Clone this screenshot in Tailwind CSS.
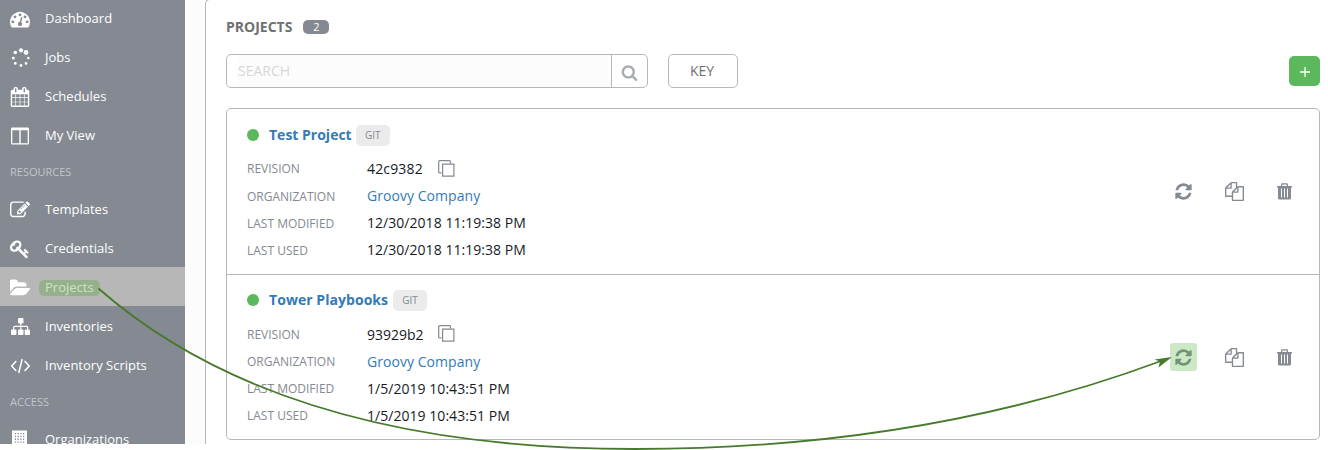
<!DOCTYPE html>
<html lang="en">
<head>
<meta charset="utf-8">
<title>Projects</title>
<script src="https://cdn.jsdelivr.net/npm/@tailwindcss/browser@4"></script>
</head>
<body class="relative h-[450px] w-[1328px] overflow-hidden bg-white font-['Open_Sans',sans-serif]">
<svg class="hidden">
  <symbol id="refresh" viewBox="0 0 1792 1792"><path d="M1639 1056q0 5-1 7-64 268-268 434.500t-478 166.500q-146 0-282.500-55t-243.500-157l-129 129q-19 19-45 19t-45-19-19-45v-448q0-26 19-45t45-19h448q26 0 45 19t19 45-19 45l-137 137q71 66 161 102t187 36q134 0 250-65t186-179q11-17 53-117 8-23 30-23h192q13 0 22.500 9.500t9.500 22.500zm25-800v448q0 26-19 45t-45 19h-448q-26 0-45-19t-19-45 19-45l138-138q-148-137-349-137-134 0-250 65t-186 179q-11 17-53 117-8 23-30 23h-199q-13 0-22.500-9.500t-9.500-22.500v-7q65-268 270-434.500t480-166.500q146 0 284 55.500t245 156.500l130-129q19-19 45-19t45 19 19 45z"/></symbol>
  <symbol id="files" viewBox="0 0 1792 1792"><path d="M1696 384q40 0 68 28t28 68v1216q0 40-28 68t-68 28h-960q-40 0-68-28t-28-68v-288h-544q-40 0-68-28t-28-68v-672q0-40 20-88t48-76l408-408q28-28 76-48t88-20h416q40 0 68 28t28 68v328q68-40 128-40h416zm-544 213l-299 299h299v-299zm-640-384l-299 299h299v-299zm196 647l316-316v-416h-384v416q0 40-28 68t-68 28h-416v640h512v-256q0-40 20-88t48-76zm956 804v-1152h-384v416q0 40-28 68t-68 28h-416v640h896z"/></symbol>
  <symbol id="trash" viewBox="0 0 15 17"><path fill-rule="evenodd" d="M4 3V1.600Q4 .3 5.300 .3h4.400Q11 .3 11 1.600V3h4v1.500h-1V15q0 1.500-1.500 1.500h-10Q1 16.500 1 15V4.500H0V3zM5.200 3h4.600V1.900q0-.4-.4-.4H5.600q-.4 0-.4.4zM4 5.600v9h1v-9zm3 0v9h1v-9zm3 0v9h1v-9z"/></symbol>
  <symbol id="copy" viewBox="0 0 17 17"><path d="M4.600 4.100h11.300v12H4.600zM3.500 12.900H1.700q-1 0-1-1V1.700q0-1 1-1h9.800q1 0 1 1v1.500" fill="none" stroke="currentColor" stroke-width="1.200"/></symbol>
</svg>

<div class="flex h-[444px] overflow-hidden bg-[#fcfcfc]">
  <nav class="w-[185px] shrink-0 bg-[#848992] text-[13px] text-white">
    <div class="-mt-[2px]">
      <a class="flex h-[39px] items-center pt-[2px] pl-[10px]"><svg class="h-5 w-5" viewBox="0 0 1792 1792" fill="currentColor"><path d="M384 1152q0-53-37.500-90.500t-90.500-37.500-90.500 37.500-37.500 90.500 37.500 90.500 90.500 37.500 90.500-37.500 37.500-90.500zm192-448q0-53-37.500-90.500t-90.500-37.500-90.500 37.500-37.500 90.500 37.500 90.500 90.500 37.500 90.500-37.500 37.500-90.500zm428 481l101-382q6-26-7.500-48.500t-38.500-29.500-48 6.500-30 39.500l-101 382q-60 5-107 43.500t-63 98.500q-20 77 20 146t117 89 146-20 89-117q16-60-6-117t-72-91zm660-33q0-53-37.500-90.500t-90.500-37.500-90.500 37.500-37.500 90.500 37.500 90.500 90.500 37.500 90.500-37.500 37.500-90.500zm-640-640q0-53-37.500-90.500t-90.500-37.500-90.500 37.500-37.500 90.500 37.500 90.500 90.500 37.500 90.500-37.500 37.500-90.500zm448 192q0-53-37.500-90.500t-90.500-37.500-90.500 37.500-37.500 90.500 37.500 90.500 90.500 37.500 90.500-37.500 37.500-90.500zm320 448q0 261-141 483-19 29-54 29h-1402q-35 0-54-29-141-221-141-483 0-182 71-348t191-286 286-191 348-71 348 71 286 191 191 286 71 348z"/></svg><span class="ml-[15px]">Dashboard</span></a>
      <a class="flex h-[39px] items-center pt-[2px] pl-[10px]"><svg class="h-5 w-5" viewBox="0 0 20 20" fill="currentColor"><circle cx="11" cy="2.300" r="2.100"/><circle cx="16" cy="4.500" r="2.400"/><circle cx="5.300" cy="4.500" r="1.800"/><circle cx="3.300" cy="10" r="1.500"/><circle cx="18.300" cy="10" r="1.300"/><circle cx="5.300" cy="15.400" r="1.400"/><circle cx="16" cy="15.400" r="1.300"/><circle cx="11" cy="17.500" r="1.400"/></svg><span class="ml-[15px]">Jobs</span></a>
      <a class="flex h-[39px] items-center pt-[2px] pl-[10px]"><svg class="h-5 w-5" viewBox="0 0 1792 1792" fill="currentColor"><path d="M192 1664h288v-288h-288v288zm352 0h320v-288h-320v288zm-352-352h288v-320h-288v320zm352 0h320v-320h-320v320zm-352-384h288v-288h-288v288zm736 736h320v-288h-320v288zm-384-736h320v-288h-320v288zm768 736h288v-288h-288v288zm-384-352h320v-320h-320v320zm-352-864v-288q0-13-9.500-22.500t-22.500-9.500h-64q-13 0-22.500 9.500t-9.500 22.500v288q0 13 9.500 22.500t22.500 9.500h64q13 0 22.500-9.500t9.500-22.500zm736 864h288v-320h-288v320zm-384-384h320v-288h-320v288zm384 0h288v-288h-288v288zm32-480v-288q0-13-9.500-22.500t-22.500-9.500h-64q-13 0-22.500 9.500t-9.500 22.500v288q0 13 9.500 22.500t22.500 9.500h64q13 0 22.500-9.500t9.500-22.500zm384-64v1280q0 52-38 90t-90 38h-1408q-52 0-90-38t-38-90v-1280q0-52 38-90t90-38h128v-96q0-66 47-113t113-47h64q66 0 113 47t47 113v96h384v-96q0-66 47-113t113-47h64q66 0 113 47t47 113v96h128q52 0 90 38t38 90z"/></svg><span class="ml-[15px]">Schedules</span></a>
      <a class="flex h-[39px] items-center pt-[2px] pl-[10px]"><svg class="h-5 w-5" viewBox="0 0 20 20" fill="currentColor"><path fill-rule="evenodd" d="M2.300 1.500h15.400q1.300 0 1.300 1.300v14.400q0 1.300-1.300 1.300H2.300Q1 18.500 1 17.200V2.800Q1 1.500 2.300 1.500zM2.300 4.300v12.900h7V4.300zm8.400 0v12.900h7V4.300z"/></svg><span class="ml-[15px]">My View</span></a>
      <div class="flex h-[35px] items-center pt-[2px] pl-[10px] text-[11px] text-[#c3c6ca]">RESOURCES</div>
      <a class="flex h-[39px] items-center pt-[2px] pl-[10px]"><svg class="h-5 w-5" viewBox="0 0 1792 1792" fill="currentColor"><path d="M888 1184l116-116-152-152-116 116v56h96v96h56zm440-720q-16-16-33 1l-350 350q-17 17-1 33t33-1l350-350q17-17 1-33zm80 594v190q0 119-84.500 203.500t-203.500 84.500h-832q-119 0-203.500-84.500t-84.500-203.500v-832q0-119 84.500-203.500t203.500-84.500h832q63 0 117 25 15 7 18 23 3 17-9 29l-49 49q-14 14-32 8-23-6-45-6h-832q-66 0-113 47t-47 113v832q0 66 47 113t113 47h832q66 0 113-47t47-113v-126q0-13 9-22l64-64q15-15 35-7t20 29zm-96-738l288 288-672 672h-288v-288zm444 132l-92 92-288-288 92-92q28-28 68-28t68 28l152 152q28 28 28 68t-28 68z"/></svg><span class="ml-[15px]">Templates</span></a>
      <a class="flex h-[39px] items-center pt-[2px] pl-[10px]"><svg class="h-5 w-5" viewBox="0 0 1792 1792" fill="currentColor"><path d="M832 512q0-80-56-136t-136-56-136 56-56 136q0 42 19 83-41-19-83-19-80 0-136 56t-56 136 56 136 136 56 136-56 56-136q0-42-19-83 41 19 83 19 80 0 136-56t56-136zm851 704q0 17-49 66t-66 49q-9 0-28.500-16t-36.500-33-38.500-40-24.500-26l-96 96 220 220q28 28 28 68 0 42-39 81t-81 39q-40 0-68-28l-671-671q-176 131-365 131-163 0-265.500-102.500t-102.500-265.500q0-160 95-313t248-248 313-95q163 0 265.500 102.500t102.500 265.500q0 189-131 365l355 355 96-96q-3-3-26-24.500t-40-38.500-33-36.500-16-28.500q0-17 49-66t66-49q13 0 23 10 6 6 46 44.500t82 79.500 86.500 86 73 78 28.500 41z"/></svg><span class="ml-[15px]">Credentials</span></a>
      <a class="flex h-[39px] items-center bg-[#b7b7b7] pt-[2px] pl-[10px]"><svg class="h-5 w-5" viewBox="0 0 1792 1792" fill="currentColor"><path d="M1815 952q0 31-31 66l-336 396q-43 51-120.500 86.500t-143.500 35.500h-1088q-34 0-60.500-13t-26.500-43q0-31 31-66l336-396q43-51 120.500-86.500t143.500-35.500h1088q34 0 60.500 13t26.500 43zm-343-344v160h-832q-94 0-197 47.500t-164 119.500l-337 396-5 6q0-4-.5-12.500t-.5-12.500v-960q0-92 66-158t158-66h320q92 0 158 66t66 158v32h544q92 0 158 66t66 158z"/></svg><span class="ml-[9px] flex h-4 w-[61px] items-center rounded-[5px] bg-[#96b08c] pl-[6px] text-[#cfe2c4]">Projects</span></a>
      <a class="flex h-[39px] items-center pt-[2px] pl-[10px]"><svg class="h-5 w-5" viewBox="0 0 20 20" fill="currentColor"><rect x="8" y="1" width="5.500" height="5.500" rx="1"/><rect x="1" y="12.500" width="5.500" height="5.500" rx="1"/><rect x="8" y="12.500" width="5.500" height="5.500" rx="1"/><rect x="14.700" y="12.500" width="5.300" height="5.500" rx="1"/><path d="M10.800 6v8M3.700 14V10.300q0-1 1-1h12q1 0 1 1V14" fill="none" stroke="currentColor" stroke-width="1.200"/></svg><span class="ml-[15px]">Inventories</span></a>
      <a class="flex h-[39px] items-center pt-[2px] pl-[10px]"><svg class="h-5 w-5" viewBox="0 0 20 20" fill="none" stroke="currentColor" stroke-width="1.500"><path d="M6.300 5L1.700 10l4.600 5M14.600 5l4.600 5-4.600 5M12.200 3l-3.500 14"/></svg><span class="ml-[15px]">Inventory Scripts</span></a>
      <div class="flex h-[35px] items-center pt-[2px] pl-[10px] text-[11px] text-[#c3c6ca]">ACCESS</div>
      <a class="flex h-[39px] items-center pt-[2px] pl-[10px]"><svg class="h-5 w-5" viewBox="0 0 20 20" fill="currentColor"><path d="M2 .5h15v19H2z"/><path d="M5.500 3v17M8.200 3v17M10.900 3v17M13.600 3v17" stroke="#848992" stroke-width="1.200" stroke-dasharray="1.300 1.500"/></svg><span class="ml-[15px]">Organizations</span></a>
    </div>
  </nav>

  <main class="-mt-px ml-5 h-[460px] flex-1 rounded-tl-[5px] border-t border-l border-[#b7b7b7] bg-white pr-2 pl-5">
    <div class="flex h-[54px] items-center text-sm font-bold text-[#707070]">PROJECTS<span class="ml-[11px] flex h-[14px] w-[26px] items-center justify-center rounded-[5px] bg-[#848992] text-[11px] font-normal text-white">2</span></div>
    <div class="flex h-[34px] items-center">
      <div class="flex h-[34px] w-[422px] rounded-[5px] border border-[#b7b7b7]">
        <div class="ml-[10px] flex flex-1 items-center border-r border-[#b7b7b7] bg-[#fcfcfc] pl-[1px] text-sm text-[#d7d7d7]">SEARCH</div>
        <div class="flex w-[35px] items-center pt-[2px] pl-[9px] text-[#a9adb3]"><svg class="h-[17px] w-[17px]" viewBox="0 0 1792 1792" fill="currentColor"><path d="M1216 832q0-185-131.500-316.500t-316.500-131.500-316.500 131.500-131.500 316.500 131.500 316.500 316.500 131.500 316.500-131.500 131.500-316.500zm512 832q0 52-38 90t-90 38q-54 0-90-38l-343-342q-179 124-399 124-143 0-273.500-55.500t-225-150-150-225-55.500-273.500 55.500-273.500 150-225 225-150 273.500-55.500 273.500 55.500 225 150 150 225 55.500 273.500q0 220-124 399l343 343q37 37 37 90z"/></svg></div>
      </div>
      <button class="ml-5 h-[34px] w-[70px] rounded-[5px] border border-[#b7b7b7] pr-[2px] text-sm text-[#707070]">KEY</button>
      <button class="ml-auto flex h-[30px] w-[31px] items-center justify-center rounded-[5px] bg-[#5cb85c] text-white"><svg class="mt-[2px] h-[10px] w-[10px]" viewBox="0 0 10 10"><path d="M5 0v10M0 5h10" stroke="currentColor" stroke-width="1.300"/></svg></button>
    </div>

    <div class="mt-5 h-[332px] rounded-[5px] border border-[#b7b7b7] text-sm text-[#161b1f]">
      <section class="flex h-[166px] justify-between border-b border-[#b7b7b7] pr-[27px] pl-5">
        <div class="pt-[15px]">
          <div class="flex h-[22px] items-center"><i class="h-3 w-3 rounded-full bg-[#5cb85c]"></i><b class="ml-[10px] text-[#337ab7]">Test Project</b><span class="ml-[4px] flex h-[21px] w-[34px] items-center justify-center rounded-[5px] bg-[#ebebeb] text-[10px] text-[#848992]">GIT</span></div>
          <dl class="mt-[9px] grid auto-rows-[27px] grid-cols-[120px_auto] items-center">
            <dt class="text-xs text-[#848992]">REVISION</dt><dd class="flex items-center"><span class="w-[56px] tracking-[0.15px]">42c9382</span><svg class="ml-[15px] h-[17px] w-[17px] text-[#848992]"><use href="#copy"/></svg></dd>
            <dt class="pt-[2px] text-xs text-[#848992]">ORGANIZATION</dt><dd class="tracking-[0.05px] text-[#337ab7]">Groovy Company</dd>
            <dt class="pt-[2px] text-xs text-[#848992]">LAST MODIFIED</dt><dd class="tracking-[0.04px]">12/30/2018 11:19:38 PM</dd>
            <dt class="pt-[2px] text-xs text-[#848992]">LAST USED</dt><dd class="tracking-[0.04px]">12/30/2018 11:19:38 PM</dd>
          </dl>
        </div>
        <div class="flex items-center text-[#848992]">
          <span class="mr-[28px] flex h-7 w-[27px] items-center justify-center"><svg class="h-[19px] w-[19px]" fill="currentColor"><use href="#refresh"/></svg></span>
          <svg class="mr-[33px] h-[19px] w-[19px]" fill="currentColor"><use href="#files"/></svg>
          <svg class="h-[17px] w-[15px]" fill="currentColor"><use href="#trash"/></svg>
        </div>
      </section>
      <section class="flex h-[164px] justify-between pr-[27px] pl-5">
        <div class="pt-[14px]">
          <div class="flex h-[22px] items-center"><i class="h-3 w-3 rounded-full bg-[#5cb85c]"></i><b class="ml-[10px] tracking-[0.05px] text-[#337ab7]">Tower Playbooks</b><span class="ml-[5px] flex h-[21px] w-[34px] items-center justify-center rounded-[5px] bg-[#ebebeb] text-[10px] text-[#848992]">GIT</span></div>
          <dl class="mt-[10px] grid auto-rows-[27px] grid-cols-[120px_auto] items-center">
            <dt class="text-xs text-[#848992]">REVISION</dt><dd class="flex items-center"><span class="w-[56px]">93929b2</span><svg class="mb-[2px] ml-[15px] h-[17px] w-[17px] text-[#848992]"><use href="#copy"/></svg></dd>
            <dt class="text-xs text-[#848992]">ORGANIZATION</dt><dd class="tracking-[0.05px] text-[#337ab7]">Groovy Company</dd>
            <dt class="text-xs text-[#848992]">LAST MODIFIED</dt><dd class="tracking-[0.04px]">1/5/2019 10:43:51 PM</dd>
            <dt class="text-xs text-[#848992]">LAST USED</dt><dd class="tracking-[0.04px]">1/5/2019 10:43:51 PM</dd>
          </dl>
        </div>
        <div class="flex items-center text-[#848992]">
          <span class="mr-[28px] flex h-7 w-[27px] items-center justify-center rounded-[3px] bg-[#cde8c4] text-[#6f9478]"><svg class="h-[19px] w-[19px]" fill="currentColor"><use href="#refresh"/></svg></span>
          <svg class="mr-[33px] h-[19px] w-[19px]" fill="currentColor"><use href="#files"/></svg>
          <svg class="h-[17px] w-[15px]" fill="currentColor"><use href="#trash"/></svg>
        </div>
      </section>
    </div>
  </main>
</div>

<svg class="pointer-events-none absolute inset-0" width="1328" height="450" viewBox="0 0 1328 450" fill="none"><path d="M98.500 288.500C235 408 430 449 635 449C822 449 1000 421 1161 361" stroke="#467a2c" stroke-width="1.800"/><path d="M1172 357l-17.500 2.500 5.500 2-1.500 6z" fill="#467a2c"/></svg>
</body>
</html>
